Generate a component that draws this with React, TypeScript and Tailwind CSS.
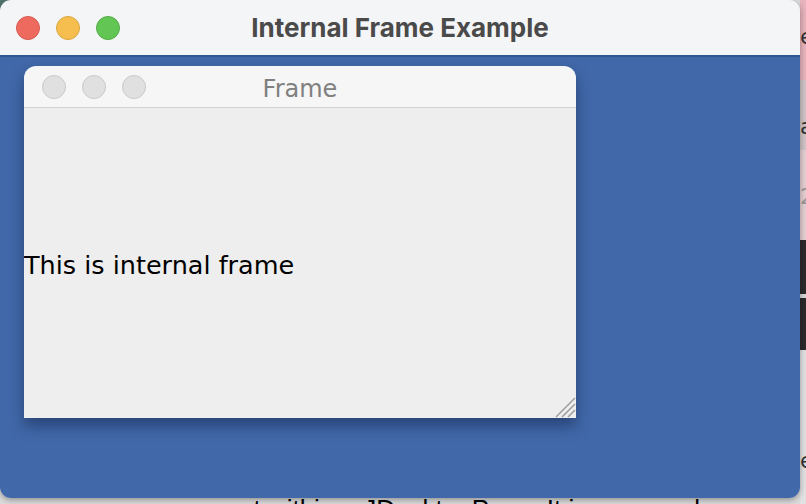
import React from 'react';

const lucida = { fontFamily: '"DejaVu Sans", "Liberation Sans", sans-serif' };

function TrafficLight({ color, border }: { color: string; border: string }) {
  return <div className={`h-[24px] w-[24px] rounded-full border ${color} ${border}`} />;
}

function ResizeGrip() {
  return (
    <svg width="22" height="22" viewBox="0 0 22 22" className="absolute bottom-0 right-0">
      <path d="M2 21 L21 2 M8 21 L21 8 M14 21 L21 14" stroke="#a0a0a0" strokeWidth="1.6" />
    </svg>
  );
}

function InternalFrame() {
  return (
    <div className="relative flex h-[352px] w-[552px] flex-col overflow-hidden rounded-t-[12px] shadow-[0_8px_14px_rgba(20,40,80,0.55)]">
      <div className="relative flex h-[42px] shrink-0 items-center border-b border-[#d2d2d2] bg-[#f6f6f6] px-[18px]">
        <div className="flex gap-[16px]">
          <div className="h-[24px] w-[24px] rounded-full border border-[#c9c9c9] bg-[#e0e0e0]" />
          <div className="h-[24px] w-[24px] rounded-full border border-[#c9c9c9] bg-[#e0e0e0]" />
          <div className="h-[24px] w-[24px] rounded-full border border-[#c9c9c9] bg-[#e0e0e0]" />
        </div>
        <div className="absolute inset-0 flex items-center justify-center pt-[5px] text-[24px] text-[#808080]" style={lucida}>
          Frame
        </div>
      </div>
      <div className="relative flex flex-1 items-center bg-[#eeeeee]">
        <span className="pt-[6px] text-[25.5px] leading-none text-black" style={lucida}>
          This is internal frame
        </span>
        <ResizeGrip />
      </div>
    </div>
  );
}

export default function App() {
  return (
    <div className="relative h-[504px] w-[806px] overflow-hidden bg-[#dcdcdc]">
      {/* stuff behind the window */}
      <div className="absolute right-0 top-0 flex h-full w-[6px] flex-col text-[22px] leading-none text-[#333]" style={lucida}>
        <div className="h-[14px] bg-[#e7b3bc]" />
        <div className="h-[66px] overflow-hidden bg-[#e7b3bc] pt-[12px]">e</div>
        <div className="h-[70px] overflow-hidden bg-[#cfc4c6] pt-[36px]">a</div>
        <div className="h-[90px] overflow-hidden bg-[#e3cfd2] pt-[36px] text-[#999]">2</div>
        <div className="h-[54px] bg-[#2b2b2b]" />
        <div className="h-[4px] bg-[#d8d8d8]" />
        <div className="h-[52px] bg-[#2b2b2b]" />
        <div className="flex-1 overflow-hidden bg-[#e2e2e2] pt-[100px]">e</div>
      </div>
      <div className="absolute left-0 top-0 h-[20px] w-[20px] bg-[#51776f]" />
      <div
        className="absolute left-[132px] top-[496px] whitespace-nowrap text-[26px] leading-none text-black"
        style={{ fontFamily: '"Liberation Sans", sans-serif' }}
      >
        component within a JDesktopPane. It is commonly
      </div>

      {/* main window */}
      <div className="absolute left-0 top-0 flex h-[498px] w-[800px] flex-col overflow-hidden rounded-[11px] shadow-[0_2px_6px_rgba(0,0,0,0.35)]">
        <div className="relative flex h-[57px] shrink-0 items-center border-b-2 border-[#2f5892] bg-[#f4f5f6] px-[16px]">
          <div className="flex gap-[16px]">
            <TrafficLight color="bg-[#ee6a5f]" border="border-[#d65a50]" />
            <TrafficLight color="bg-[#f5be4f]" border="border-[#dca53e]" />
            <TrafficLight color="bg-[#62c554]" border="border-[#52ad45]" />
          </div>
          <div
            className="absolute inset-0 flex items-center justify-center text-[26px] font-bold text-[#4a4a4a]"
            style={{ fontFamily: 'Inter, "Liberation Sans", sans-serif' }}
          >
            Internal Frame Example
          </div>
        </div>
        <div className="flex-1 bg-[#4168a8] pl-[24px] pt-[9px]">
          <InternalFrame />
        </div>
      </div>
    </div>
  );
}
